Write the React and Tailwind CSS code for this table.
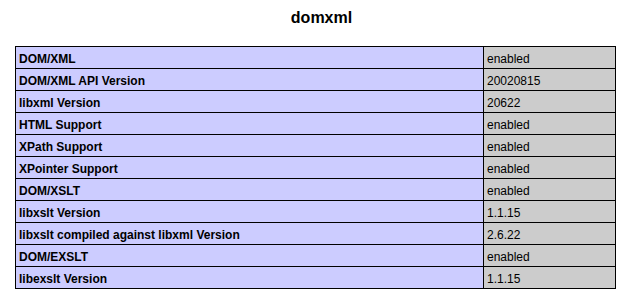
const ROWS = [
  ['DOM/XML', 'enabled'],
  ['DOM/XML API Version', '20020815'],
  ['libxml Version', '20622'],
  ['HTML Support', 'enabled'],
  ['XPath Support', 'enabled'],
  ['XPointer Support', 'enabled'],
  ['DOM/XSLT', 'enabled'],
  ['libxslt Version', '1.1.15'],
  ['libxslt compiled against libxml Version', '2.6.22'],
  ['DOM/EXSLT', 'enabled'],
  ['libexslt Version', '1.1.15'],
]

export default function App() {
  return (
    <div className="w-[631px] h-[306px] bg-white text-black font-['Liberation_Sans',Arial,sans-serif]">
      <h2 className="pt-[9px] pl-[12px] text-center text-[16px] leading-[18px] font-bold">domxml</h2>

      <table className="mt-[19px] ml-[15px] w-[601px] border-collapse text-[12px]">
        <tbody>
          {ROWS.map(([label, value]) => (
            <tr key={label} className="h-[22px]">
              <td className="w-[468px] border border-black bg-[#ccccff] px-[3px] pt-[2px] pb-0 font-bold leading-[14px]">{label}</td>
              <td className="border border-black bg-[#cccccc] px-[3px] pt-[2px] pb-0 leading-[14px]">{value}</td>
            </tr>
          ))}
        </tbody>
      </table>
    </div>
  )
}
